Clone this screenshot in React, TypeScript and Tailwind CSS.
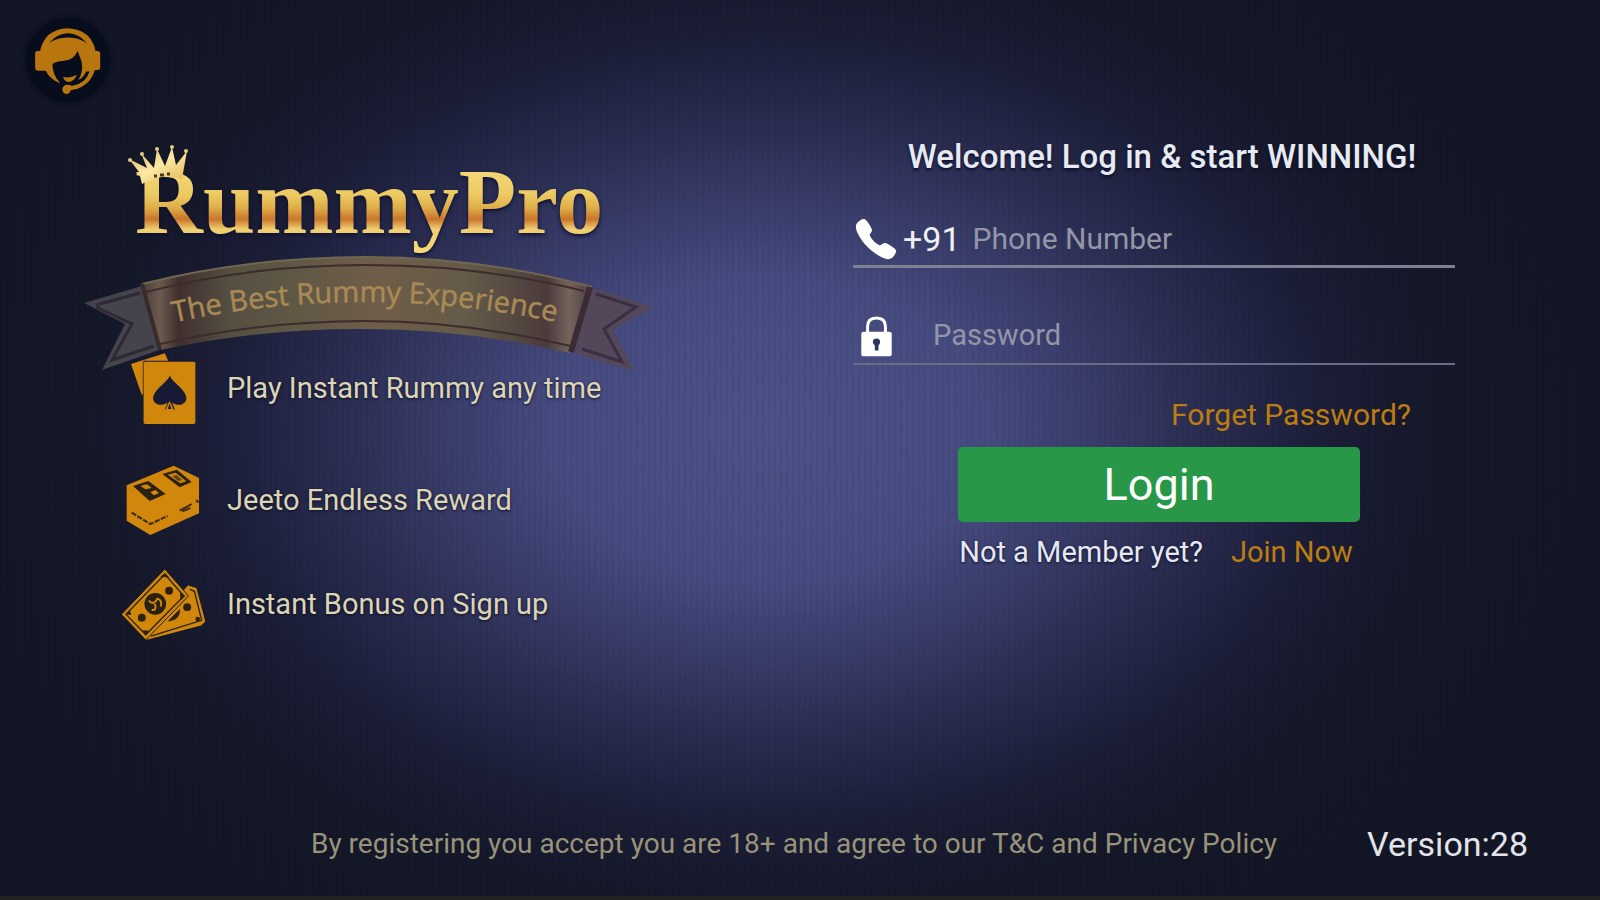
import type { ReactNode } from "react";
import { IoCall } from "react-icons/io5";

function HeadsetIcon() {
  return (
    <svg viewBox="100 70 210 214" className="h-[71px] w-[70px] text-[#b9760f]" fill="currentColor" aria-hidden="true">
      <path d="M120 152 Q134 82 205 80 Q274 84 288 148 L274 150 Q254 98 205 95 Q156 98 134 150 Z" />
      <path d="M106 154 Q106 148 114 148 H130 Q146 110 205 108 Q262 110 278 148 H294 Q302 148 302 156 V198 Q302 206 292 206 H286 Q276 240 250 254 Q236 264 214 266 Q210 278 200 278 Q188 276 188 262 Q190 252 202 250 Q212 250 216 254 Q258 248 270 210 H260 Q250 230 236 236 Q252 212 246 180 L234 148 Q222 176 192 178 Q168 180 158 188 Q158 220 182 246 Q150 234 138 208 H116 Q106 208 106 198 Z" />
      <path d="M190 226 Q210 232 232 220 Q222 242 206 242 Q194 240 190 226 Z" />
    </svg>
  );
}

function CardsIcon() {
  return (
    <svg viewBox="60 32 205 220" className="h-[73px] w-[68px]" aria-hidden="true">
      <path d="M66 68 L168 36 L178 58 H104 V160 L98 160 Z" fill="#d0870b" />
      <rect x="104" y="61" width="156" height="188" rx="5" fill="#d0870b" />
      <path d="M103 60 V164" stroke="#5a3f14" strokeWidth="3" />
      <path
        d="M183 103 C190 124 234 146 233 172 C232 190 208 198 190 184 L198 205 H168 L176 184 C158 198 133 190 133 172 C133 146 176 124 183 103 Z"
        fill="#161a35"
      />
      <path d="M182 180 L190 194 L194 207 H170 L175 194 Z" fill="#d0870b" />
      <path d="M182 188 L188 204 H177 Z" fill="#161a35" />
    </svg>
  );
}

function BundleIcon() {
  return (
    <svg viewBox="50 374 228 216" className="h-[72px] w-[76px]" aria-hidden="true">
      <path d="M55 438 L196 379 L272 416 V522 L126 587 L55 544 Z" fill="#d0870b" />
      <g fill="#2b210f">
        <path d="M74 440 L120 425 L172 464 L124 485 Z" />
        <path d="M162 404 L206 391 L250 428 L214 444 Z" />
      </g>
      <g fill="#d0870b">
        <path d="M96 440 L116 435 L130 446 L112 450 Z" />
        <path d="M126 458 L142 452 L152 462 L136 468 Z" />
        <path d="M178 406 L202 400 L234 426 L216 432 Z" />
      </g>
      <path d="M192 410 L204 407 L222 422 L210 425 Z" fill="#5d3f10" />
      <g fill="none" stroke="#3b2a0c" strokeWidth="6">
        <path d="M70 520 L126 554 L178 530" strokeDasharray="16 4" />
        <path d="M214 514 L250 494 M222 516 L246 506" />
        <path d="M264 482 L270 490" />
      </g>
    </svg>
  );
}

function BillsIcon() {
  return (
    <svg viewBox="34 684 264 228" className="h-[75px] w-[87px]" aria-hidden="true">
      <path d="M240 740 L266 748 L293 850 L280 862 L112 906 L120 880 Z" fill="#d0870b" />
      <path d="M246 752 L260 758 L282 846 L128 894" fill="none" stroke="#2b210f" strokeWidth="4" />
      <g fill="#2b210f">
        <circle cx="238" cy="806" r="12" />
        <path d="M178 850 L216 812 Q218 846 178 850 Z" />
        <circle cx="270" cy="842" r="7" />
      </g>
      <path d="M170 690 L242 772 L112 906 L38 828 Z" fill="#d0870b" stroke="#1b1a2c" strokeWidth="3" />
      <path d="M170 706 L228 772 L112 890 L52 828 Z" fill="none" stroke="#2b210f" strokeWidth="4" />
      <g fill="#2b210f">
        <circle cx="141" cy="796" r="33" />
        <circle cx="183" cy="756" r="12" />
        <circle cx="100" cy="838" r="12" />
        <path d="M156 714 L170 702 L184 716 Z M216 762 L232 772 L218 786 Z M50 828 L64 816 L68 830 Z M102 876 L122 878 L112 892 Z" />
      </g>
      <path d="M122 786 Q134 804 148 780 Q162 784 158 804 M130 814 Q146 818 140 796" fill="none" stroke="#d0870b" strokeWidth="6" />
    </svg>
  );
}

function LockIcon() {
  return (
    <svg viewBox="60 586 98 124" className="h-[41px] w-[33px]" aria-hidden="true">
      <path d="M82 640 V618 Q82 592 109 592 Q136 592 136 618 V640" fill="none" stroke="#fff" strokeWidth="9" />
      <path d="M70 634 H148 Q155 634 155 641 V700 Q155 708 148 708 H70 Q63 708 63 700 V641 Q63 634 70 634 Z" fill="#fff" />
      <path d="M109 654 Q120 654 120 665 Q120 671 115 675 V690 H104 V675 Q98 671 98 665 Q98 654 109 654 Z" fill="#2f3360" />
    </svg>
  );
}

function Logo() {
  return (
    <svg viewBox="82 140 574 236" className="relative z-10 w-[574px] max-w-full" role="img" aria-label="RummyPro, The Best Rummy Experience">
      <defs>
        <linearGradient id="gold" gradientUnits="userSpaceOnUse" x1="0" y1="170" x2="0" y2="252">
          <stop offset="0" stopColor="#f3d877" />
          <stop offset="0.3" stopColor="#ecca62" />
          <stop offset="0.46" stopColor="#dfae48" />
          <stop offset="0.6" stopColor="#c9762b" />
          <stop offset="0.72" stopColor="#efcd70" />
          <stop offset="1" stopColor="#f7d873" />
        </linearGradient>
        <linearGradient id="crown" x1="0" y1="0" x2="1" y2="1">
          <stop offset="0" stopColor="#d9b061" />
          <stop offset="0.5" stopColor="#fbe9a4" />
          <stop offset="1" stopColor="#e2b04a" />
        </linearGradient>
        <linearGradient id="band" x1="0" x2="1">
          <stop offset="0" stopColor="#4a3c3a" />
          <stop offset="0.04" stopColor="#6b5a4e" />
          <stop offset="0.08" stopColor="#3f302e" />
          <stop offset="0.2" stopColor="#565043" />
          <stop offset="0.35" stopColor="#615845" />
          <stop offset="0.52" stopColor="#6f5d49" />
          <stop offset="0.72" stopColor="#645b48" />
          <stop offset="0.9" stopColor="#4b3b3c" />
          <stop offset="0.95" stopColor="#75635c" />
          <stop offset="1" stopColor="#4c3b43" />
        </linearGradient>
        <path id="tagline" d="M172 323 Q366 280 570 325" />
      </defs>

      {/* ribbon tails */}
      <path d="M84 303 L142 286 L162 349 L102 370 L125 324 Z" fill="#45434b" />
      <path d="M96 305 L140 293 M96 307 L132 324 L112 360 L154 346" fill="none" stroke="#2e2a35" strokeWidth="3" />
      <path d="M590 287 L653 307 L613 330 L634 371 L570 352 Z" fill="#54475a" />
      <path d="M596 294 L636 307 L604 329 L622 362 L582 349" fill="none" stroke="#3a2f42" strokeWidth="3" />

      {/* ribbon band */}
      <path d="M142 284 Q250 257 366 257 Q480 257 592 287 L570 353 Q465 329 366 329 Q262 328 160 350 Z" fill="url(#band)" />
      <path d="M142 284 Q250 257 366 257 Q480 257 592 287" fill="none" stroke="#716750" strokeWidth="2" />
      <path d="M146 292 Q250 265 366 265 Q480 265 584 291" fill="none" stroke="#3d2c2c" strokeWidth="2" />
      <path d="M160 344 Q262 321 366 321 Q465 321 570 346" fill="none" stroke="#3d2c2c" strokeWidth="2" />
      <path d="M142 284 L160 350" stroke="#3a2b2b" strokeWidth="4" />
      <path d="M590 287 L571 352" stroke="#3b2b35" strokeWidth="6" />

      <text fontFamily="'Open Sans', 'Noto Sans', sans-serif" fontSize="29" fill="#a98a55" stroke="#a98a55" strokeWidth="0.5">
        <textPath href="#tagline" startOffset="2">
          The Best Rummy Experience
        </textPath>
      </text>

      <text
        x="135"
        y="233"
        fontFamily="'Liberation Serif', serif"
        fontWeight="700"
        fontSize="94"
        fill="url(#gold)"
        className="drop-shadow-[0_2px_2px_#0b0f33]"
      >
        RummyPro
      </text>

      {/* crown */}
      <path
        d="M142 184 L139 172 L129 159 L147 168 L141 153 L154 168 L157 149 L165 166 L172 147 L176 165 L187 151 L182 179 Q164 172 142 184 Z"
        fill="url(#crown)"
      />
      <g fill="#e8c980">
        <circle cx="130" cy="160" r="2" />
        <circle cx="142" cy="154" r="2" />
        <circle cx="157" cy="149" r="2" />
        <circle cx="172" cy="147" r="2" />
        <circle cx="186" cy="151" r="2" />
      </g>
      <path d="M154 176 H157 M160 175 H164 M167 174 H170" stroke="#4a3a1a" strokeWidth="3" />
    </svg>
  );
}

function Feature({ icon, children }: { icon: ReactNode; children: ReactNode }) {
  return (
    <li className="flex h-[72px] items-center gap-5">
      <span className="flex w-[88px] shrink-0 items-center justify-center">{icon}</span>
      <span className="text-[29px] leading-10 text-[#ddd5b4] [text-shadow:0_1px_3px_#0b0f2a]">{children}</span>
    </li>
  );
}

export default function App() {
  return (
    <div className="relative flex min-h-screen flex-col border-b-4 border-[#232323] bg-[#141726] bg-[radial-gradient(ellipse_39%_49%_at_48%_48%,#4c5187_0%,#464b7f_35%,#3a3e6c_50%,#2e3157_65%,#232646_78%,#1a1d35_91%,#151829_108%,#131624_130%)] font-['Roboto',sans-serif]">
      <div className="flex flex-1 flex-col bg-[repeating-linear-gradient(90deg,rgba(0,0,0,0.04)_0px,rgba(0,0,0,0.04)_2px,transparent_2px,transparent_6px)]">
        <header className="pt-[18px] pl-[26px]">
          <button
            type="button"
            aria-label="Customer support"
            className="flex size-[84px] items-center justify-center rounded-full bg-[#080d1d] shadow-[0_0_6px_#080d1d]"
          >
            <HeadsetIcon />
          </button>
        </header>

        <main className="grid flex-1 grid-cols-2">
          <section className="pt-[38px] pl-[82px]">
            <Logo />
            <ul className="-mt-[24px] pl-[37px]">
              <Feature icon={<CardsIcon />}>Play Instant Rummy any time</Feature>
              <li aria-hidden="true" className="h-10" />
              <Feature icon={<BundleIcon />}>Jeeto Endless Reward</Feature>
              <li aria-hidden="true" className="h-8" />
              <Feature icon={<BillsIcon />}>Instant Bonus on Sign up</Feature>
            </ul>
          </section>

          <form className="flex flex-col pt-[35px] pr-[145px] pl-[53px]" onSubmit={(e) => e.preventDefault()}>
            <h1 className="pl-4 text-center text-[33px] leading-10 font-medium text-[#e8eaf2] [text-shadow:0_2px_3px_#0b0f2a]">
              Welcome! Log in &amp; start WINNING!
            </h1>

            <div className="mt-[35px] flex h-14 items-center border-b-3 border-[#7e8093]">
              <IoCall className="size-[46px] shrink-0 text-white" aria-hidden="true" />
              <label htmlFor="phone" className="ml-1 text-[34px] leading-10 text-[#eef0f6]">
                +91
              </label>
              <input
                id="phone"
                type="tel"
                placeholder="Phone Number"
                className="ml-3 min-w-0 flex-1 bg-transparent text-[30px] text-white outline-none placeholder:text-[#9496a8]"
              />
            </div>

            <div className="mt-[41px] flex h-14 items-center border-b-2 border-[#696c86]">
              <label htmlFor="password" className="ml-[7px] shrink-0" aria-label="Password">
                <LockIcon />
              </label>
              <input
                id="password"
                type="password"
                placeholder="Password"
                className="ml-10 min-w-0 flex-1 bg-transparent text-[29px] text-white outline-none placeholder:text-[#9496a8]"
              />
            </div>

            <a href="#forget" className="mt-[30px] mr-11 self-end text-[30px] leading-10 text-[#bd7c12]">
              Forget Password?
            </a>

            <button
              type="submit"
              className="mt-3 ml-[10px] h-[75px] w-[402px] max-w-full self-center rounded-[5px] bg-[#289848] text-[45px] leading-none text-white"
            >
              Login
            </button>

            <p className="mt-[10px] ml-1 flex justify-center gap-[28px] text-[29px] leading-10 text-[#e6e8f2]">
              <span className="[text-shadow:0_1px_3px_#0b0f2a]">Not a Member yet?</span>
              <a href="#join" className="text-[#bd7c12]">
                Join Now
              </a>
            </p>
          </form>
        </main>

        <footer className="flex items-center justify-end gap-[90px] pr-[72px] pb-8 leading-10">
          <p className="text-[28px] text-[#98937a]">
            By registering you accept you are 18+ and agree to our T&amp;C and Privacy Policy
          </p>
          <span className="text-[34px] text-[#e2e4ea]">Version:28</span>
        </footer>
      </div>
    </div>
  );
}
